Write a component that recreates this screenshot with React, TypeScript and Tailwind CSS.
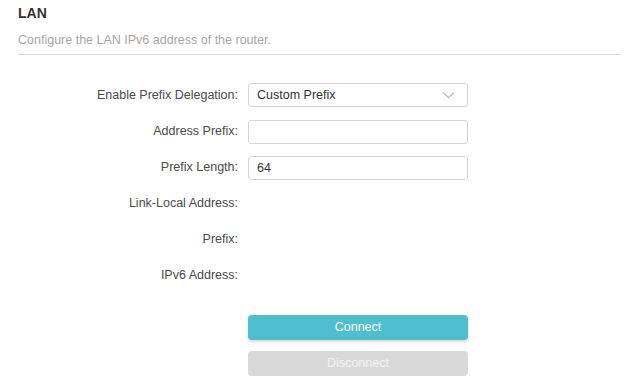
import React from 'react';

const font = { fontFamily: '"Liberation Sans", Arial, sans-serif' };

const Field = ({ label, children }: { label: string; children?: React.ReactNode }) => (
    <div className="flex items-center h-6">
        <label className="w-[230px] pr-[10px] text-right text-[12.5px] text-[#4a4a4a] shrink-0">{label}</label>
        <div className="w-[220px]">{children}</div>
    </div>
);

const App = () => {
    return (
        <div className="w-[641px] h-[387px] bg-white pl-[18px] pr-[20px] pt-[4px]" style={font}>
            {/* Header */}
            <h2 className="text-[14px] leading-[18px] font-bold text-[#333333]">LAN</h2>
            <p className="mt-[10px] text-[12.5px] leading-[16px] text-[#a6a6a6]">Configure the LAN IPv6 address of the router.</p>
            <div className="mt-[6px] h-px bg-[#d9d9d9]" />

            {/* Form */}
            <div className="mt-[28px] flex flex-col gap-3">
                <Field label="Enable Prefix Delegation:">
                    <div className="h-6 border border-[#d6d6d6] rounded-[3px] flex items-center justify-between pl-2 pr-3 text-[12.5px] text-[#333333]">
                        <span>Custom Prefix</span>
                        <svg width="13" height="8" viewBox="0 0 13 8" fill="none">
                            <path d="M1 1.5l5.5 5 5.5-5" stroke="#bdbdbd" strokeWidth="1.3" />
                        </svg>
                    </div>
                </Field>
                <Field label="Address Prefix:">
                    <input className="w-full h-6 border border-[#d6d6d6] rounded-[3px] px-2 text-[12.5px] text-[#333333] outline-none" />
                </Field>
                <Field label="Prefix Length:">
                    <input defaultValue="64" className="w-full h-6 border border-[#d6d6d6] rounded-[3px] px-2 text-[12.5px] text-[#333333] outline-none" />
                </Field>
                <Field label="Link-Local Address:" />
                <Field label="Prefix:" />
                <Field label="IPv6 Address:" />
            </div>

            {/* Buttons */}
            <div className="mt-[28px] ml-[230px] w-[220px] flex flex-col gap-[11px]">
                <button className="h-[25px] rounded-[4px] bg-[#4fbfd0] text-white text-[12.5px] shadow-[0_2px_3px_rgba(0,0,0,0.15)]">Connect</button>
                <button className="h-[25px] rounded-[4px] bg-[#d9d9d9] text-[#f4f4f4] text-[12.5px]">Disconnect</button>
            </div>
        </div>
    );
};

export default App;
